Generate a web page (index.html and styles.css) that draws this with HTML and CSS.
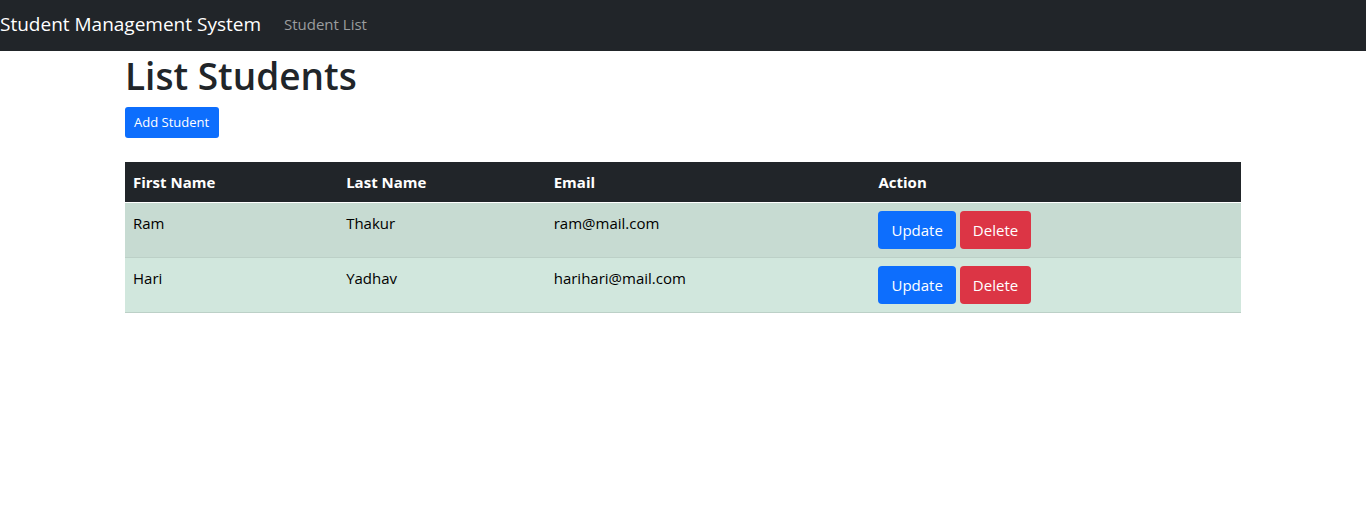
FILE: index.html
```html
<!DOCTYPE html>
<html lang="en">
<head>
<meta charset="utf-8">
<title>Student Management System</title>
<link rel="stylesheet" href="styles.css">
</head>
<body>
<nav class="navbar">
  <a class="navbar-brand" href="#">Student Management System</a>
  <a class="nav-link" href="#">Student List</a>
</nav>
<main class="container">
  <h1 class="title">List Students</h1>
  <a class="btn btn-primary btn-sm" href="#">Add Student</a>
  <table class="table">
    <colgroup><col class="col-first"><col class="col-last"><col class="col-email"><col></colgroup>
    <thead>
      <tr><th scope="col">First Name</th><th scope="col">Last Name</th><th scope="col">Email</th><th scope="col">Action</th></tr>
    </thead>
    <tbody>
      <tr>
        <td>Ram</td><td>Thakur</td><td>ram@mail.com</td>
        <td><div class="actions"><a class="btn btn-primary" href="#">Update</a><a class="btn btn-danger" href="#">Delete</a></div></td>
      </tr>
      <tr>
        <td>Hari</td><td>Yadhav</td><td>harihari@mail.com</td>
        <td><div class="actions"><a class="btn btn-primary" href="#">Update</a><a class="btn btn-danger" href="#">Delete</a></div></td>
      </tr>
    </tbody>
  </table>
</main>
</body>
</html>
```
FILE: styles.css
```css
*, *::before, *::after { box-sizing: border-box; }
body {
  margin: 0;
  font-family: "Segoe UI", "Open Sans", "Noto Sans", sans-serif;
  font-size: 15px;
  line-height: 24px;
  color: #212529;
  background: #fff;
}
a { text-decoration: none; }
.navbar {
  display: flex;
  align-items: center;
  padding: 8px 0 11px;
  background: #212529;
}
.navbar-brand {
  margin-right: 23px;
  font-size: 19px;
  line-height: 32px;
  color: #fff;
}
.nav-link { color: #9b9d9e; }
.container {
  max-width: 1140px;
  margin: 0 auto;
  padding: 1px 12px 0;
}
.title {
  margin: 0 0 7px;
  font-size: 37px;
  font-weight: 600;
  line-height: 48px;
}
.btn {
  display: inline-block;
  padding: 7px 13px;
  border-radius: 4px;
  color: #fff;
}
.btn-sm {
  display: table;
  padding: 5px 10px 5px 9px;
  border-radius: 3px;
  font-size: 13px;
  line-height: 21px;
}
.btn-primary { background: #0d6efd; }
.btn-danger { background: #dc3545; }
.table {
  width: 100%;
  margin-top: 24px;
  table-layout: fixed;
  border-collapse: separate;
  border-spacing: 0;
}
.col-first { width: 19.1%; }
.col-last { width: 18.6%; }
.col-email { width: 29.1%; }
.table th, .table td {
  padding: 8px;
  text-align: left;
  vertical-align: top;
}
.table th {
  background: #212529;
  color: #fff;
  font-weight: 700;
  border-bottom: 1px solid #fff;
}
.table td {
  color: #000;
  background: #d1e7dd;
  border-bottom: 1px solid #bcd0c7;
}
.table tbody tr:nth-child(odd) td { background: #c7dbd2; }
.actions { display: flex; gap: 4px; }
```
